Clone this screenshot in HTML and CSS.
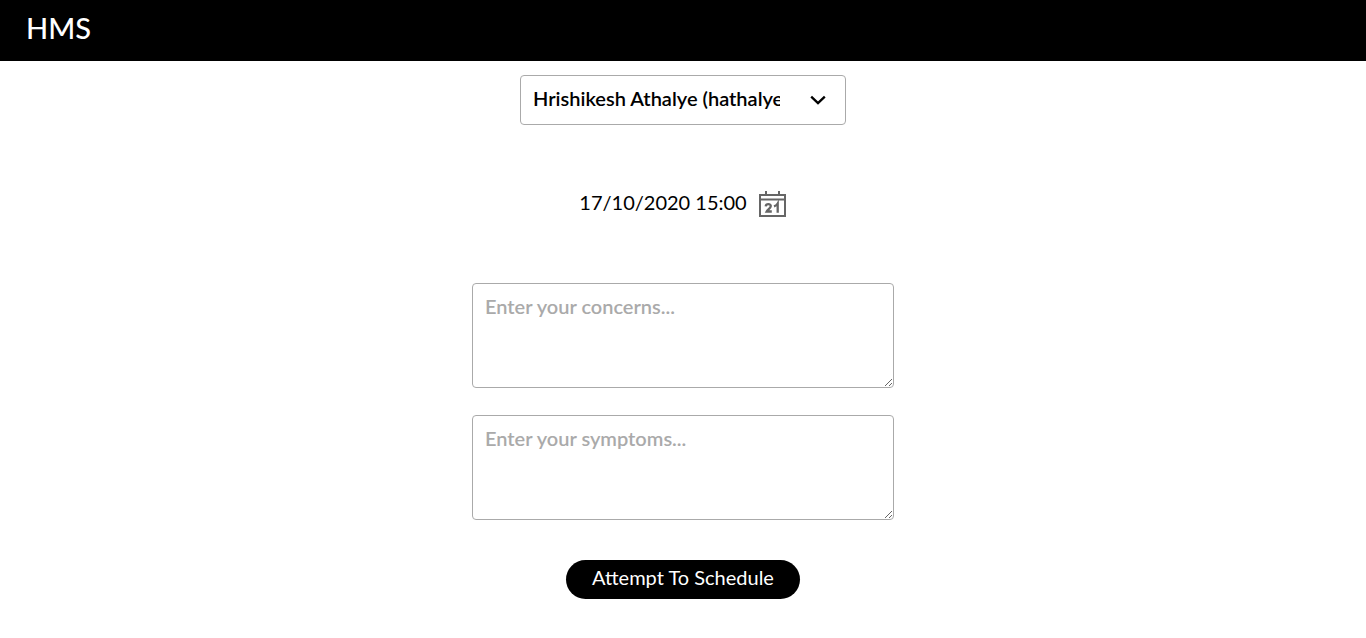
FILE: index.html
```html
<!DOCTYPE html>
<html lang="en">
<head>
<meta charset="utf-8">
<meta name="viewport" content="width=device-width, initial-scale=1">
<title>HMS</title>
<link rel="stylesheet" href="styles.css">
</head>
<body>
<header class="bar"><a class="brand" href="#">HMS</a></header>
<main>
<form class="form">
<div class="picker">
<select class="select" aria-label="Doctor"><option>Hrishikesh Athalye (hathalye@gmail.com)</option></select>
<svg class="chevron" viewBox="0 0 16 10" aria-hidden="true"><path d="M1.2 1.600 8 8.200l6.800-6.600" fill="none" stroke="#000" stroke-width="2.300"/></svg>
</div>
<div class="date">
<span>17/10/2020 15:00</span>
<button class="calendar" type="button" aria-label="Choose date">
<svg viewBox="0 0 28 28" fill="none" stroke="#666"><path stroke-width="2" d="M1 5h25v21H1zM1 9.500h25M7 1v4M20 1v4"/><path stroke-width="2.300" d="M6.700 16.300C7 13.400 11.800 13.400 11.800 16.100 11.800 18.200 8.700 19.700 7.700 21.500H12.800M15 16.400Q17.500 15.600 18.700 13.500V22.700"/></svg>
</button>
</div>
<textarea class="area" aria-label="Concerns" placeholder="Enter your concerns..."></textarea>
<textarea class="area" aria-label="Symptoms" placeholder="Enter your symptoms..."></textarea>
<button class="submit" type="button">Attempt To Schedule</button>
</form>
</main>
</body>
</html>
```
FILE: styles.css
```css
* { box-sizing: border-box; }
body { margin: 0; background: #fff; color: #000; font: 20px/24px Lato, sans-serif; }
.bar { display: flex; align-items: center; padding: 10px 26px 15px; background: #000; }
.brand { color: #fff; font-size: 29px; font-weight: 500; line-height: 36px; text-decoration: none; }
.form { display: flex; flex-direction: column; align-items: center; padding: 14px 12px 24px; }
.picker { display: grid; width: 100%; max-width: 326px; align-items: center; }
.select { grid-area: 1 / 1; width: 100%; height: 50px; padding: 0 65px 4px 12px; appearance: none; border: 1px solid #aaa; border-radius: 4px; background: #fff; color: #000; font: 600 20px/24px Lato, sans-serif; text-overflow: clip; }
.chevron { grid-area: 1 / 1; justify-self: end; width: 16px; height: 10px; margin-right: 20px; pointer-events: none; }
.date { display: flex; align-items: center; gap: 12px; margin: 65px 0; }
.date span { padding-bottom: 4px; }
.calendar { width: 28px; height: 28px; padding: 0; border: 0; background: none; }
.calendar svg { display: block; width: 28px; height: 28px; }
.area { width: 100%; max-width: 422px; height: 105px; margin-bottom: 27px; padding: 10px 12px; border: 1px solid #aaa; border-radius: 4px; color: #000; font: 600 20px/24px Lato, sans-serif; resize: both; }
.area::placeholder { color: #aaa; opacity: 1; }
.submit { margin-top: 13px; padding: 5px 26px 10px; border: 0; border-radius: 20px; background: #000; color: #fff; font: 20px/24px Lato, sans-serif; }
```
